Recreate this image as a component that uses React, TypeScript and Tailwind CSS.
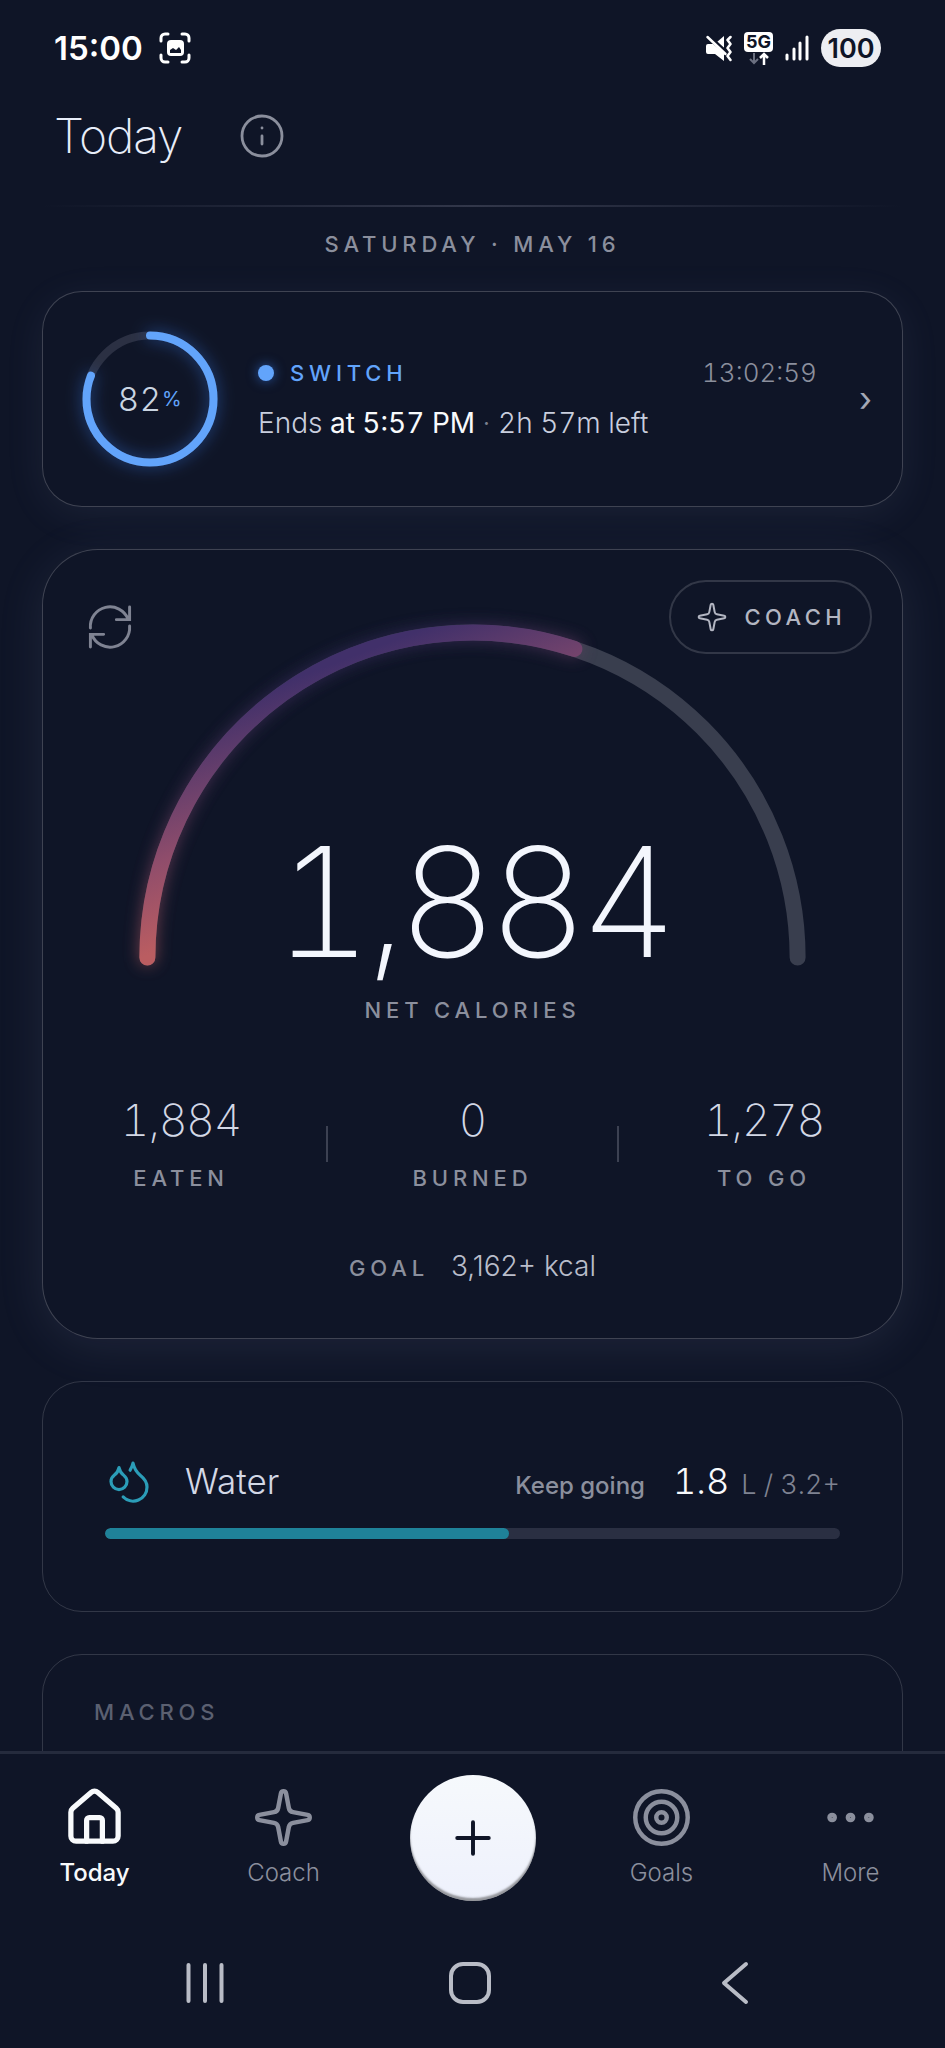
import { Droplets, Ellipsis, House, Info, Plus, Sparkle, Target } from "lucide-react";

const stats = [
  { label: "Eaten", value: "1,884" },
  { label: "Burned", value: "0" },
  { label: "To go", value: "1,278" },
];

function StatusBar() {
  return (
    <div className="flex h-24 shrink-0 items-center justify-between pl-[54px] pr-16">
      <div className="flex items-center gap-4">
        <span className="text-[33px] leading-none font-semibold text-white">15:00</span>
        <svg viewBox="0 0 32 32" className="size-8" fill="none" aria-hidden="true">
          <path
            d="M2 9V6a4 4 0 0 1 4-4h3M23 2h3a4 4 0 0 1 4 4v3M30 23v3a4 4 0 0 1-4 4h-3M9 30H6a4 4 0 0 1-4-4v-3"
            stroke="#fff"
            strokeWidth="3"
            strokeLinecap="round"
          />
          <rect x="8" y="8" width="17" height="16" rx="4" fill="#fff" />
          <path d="M11 21v-3l3-2 3 2 3-3 2 3v3z" fill="#0f1527" />
        </svg>
      </div>

      <div className="flex items-center">
        {/* Mute + vibrate */}
        <svg viewBox="0 0 27 28" className="mr-3 h-7 w-[27px]" fill="none" aria-hidden="true">
          <path d="M1 12q0-2 2-2h5L19 19v8l-9-7H3q-2 0-2-2z" fill="#fff" />
          <path d="M12 8l7-6v12z" fill="#fff" />
          <path d="M4 1l18 17" stroke="#0f1527" strokeWidth="2" />
          <path d="M2.500 3l18 17" stroke="#fff" strokeWidth="2.500" strokeLinecap="round" />
          <path
            d="M25.500 3l-3 3 3 4-3 4 3 4-3 4 3 4"
            stroke="#fff"
            strokeWidth="2.500"
            strokeLinecap="round"
            strokeLinejoin="round"
          />
        </svg>
        <div className="mr-3 flex flex-col items-center">
          <span className="flex h-5 w-[29px] items-center justify-center rounded bg-white text-[18px] leading-none font-bold text-[#0f1527]">
            5G
          </span>
          <svg viewBox="0 0 22 13" className="h-[13px] w-[22px]" fill="none" aria-hidden="true">
            <path d="M6 1v10M2 7l4 4 4-4" stroke="#6b7080" strokeWidth="2" />
            <path d="M16 13V2M12 6l4-4 4 4" stroke="#fff" strokeWidth="2.500" />
          </svg>
        </div>
        <svg viewBox="0 0 24 26" className="mr-3 h-[26px] w-6" aria-hidden="true">
          <g stroke="#fff" strokeWidth="3" strokeLinecap="round">
            <path d="M2 20v4M9 14v10M15 8v16M22 2v22" />
          </g>
        </svg>
        <span className="flex h-[38px] w-[60px] items-center justify-center rounded-full bg-[#edeef2] text-[27px] leading-none font-semibold text-[#0f1527]">
          100
        </span>
      </div>
    </div>
  );
}

function FastingCard() {
  return (
    <section className="flex h-[216px] shrink-0 items-center rounded-[40px] border border-white/20 bg-[#0f1527] pr-[30px] pl-[39px] shadow-[0_8px_40px_rgba(170,180,230,0.08)]">
      <div className="relative mr-10 size-[136px] shrink-0">
        <svg
          viewBox="0 0 136 136"
          className="size-full -rotate-90 overflow-visible"
          fill="none"
          aria-hidden="true"
        >
          <circle cx="68" cy="68" r="63.5" stroke="#2b3043" strokeWidth="8" />
          <circle
            cx="68"
            cy="68"
            r="63.5"
            stroke="#62a4fb"
            strokeWidth="8"
            strokeLinecap="round"
            pathLength="100"
            strokeDasharray="81 100"
            className="drop-shadow-[0_0_8px_rgba(59,130,246,0.5)]"
          />
        </svg>
        <div className="absolute inset-0 flex items-center justify-center">
          <span className="text-[33px] leading-none font-light tracking-wider text-slate-300">82</span>
          <span className="text-[20px] leading-none text-[#62a4fb]">%</span>
        </div>
      </div>

      <div className="flex flex-1 flex-col gap-3">
        <div className="flex items-center">
          <span className="size-4 rounded-full bg-[#62a4fb] shadow-[0_0_12px_rgba(59,130,246,0.6)]" />
          <span className="ml-4 text-[22px] leading-9 font-medium tracking-[0.22em] text-[#62a4fb] uppercase">
            Switch
          </span>
          <span className="mr-[42px] ml-auto text-[26px] leading-9 font-light text-[#8b8f9d] tabular-nums">
            13:02:59
          </span>
        </div>
        <p className="text-[28px] leading-10 font-light text-[#c9cede] tabular-nums">
          Ends <span className="font-normal text-slate-50">at 5:57 PM</span>
          <span className="text-[#7b8090]"> · </span>2h 57m left
        </p>
      </div>
      <a href="#fasting" aria-label="Open fasting" className="text-[34px] leading-none text-[#a4a8b5]">
        ›
      </a>
    </section>
  );
}

function CalorieGauge() {
  return (
    <svg
      viewBox="0 0 860 424"
      className="col-start-1 row-start-1 w-full overflow-visible"
      fill="none"
      role="img"
      aria-label="1,884 of 3,162 kcal"
    >
      <defs>
        <linearGradient id="gauge" gradientUnits="userSpaceOnUse" x1="313" y1="105" x2="387" y2="297">
          <stop offset="0" stopColor="#41306a" />
          <stop offset="0.34" stopColor="#6d416c" />
          <stop offset="0.6" stopColor="#904d6b" />
          <stop offset="1" stopColor="#ba5d61" />
        </linearGradient>
        <filter id="glow" filterUnits="userSpaceOnUse" x="60" y="40" width="740" height="420">
          <feGaussianBlur stdDeviation="8" />
        </filter>
      </defs>
      <path
        d="M104.500 408a325.500 325.500 0 0 1 651 0"
        stroke="#393e4e"
        strokeWidth="16"
        strokeLinecap="round"
      />
      <g stroke="url(#gauge)" strokeWidth="16" strokeLinecap="round">
        <path d="M104.500 408A325.500 325.500 0 0 1 532 99" filter="url(#glow)" opacity="0.6" />
        <path d="M104.500 408A325.500 325.500 0 0 1 532 99" />
      </g>
    </svg>
  );
}

function CaloriesCard() {
  return (
    <section className="relative shrink-0 rounded-[56px] border border-white/20 bg-[#0f1527] pb-[52px] shadow-[0_8px_48px_rgba(170,180,230,0.1)]">
      <button type="button" aria-label="Refresh" className="absolute top-[53px] left-[43px] text-[#7f8392]">
        <svg
          viewBox="0 0 49 49"
          className="size-12"
          fill="none"
          stroke="currentColor"
          strokeWidth="3"
          strokeLinecap="round"
          aria-hidden="true"
        >
          <path d="M4.500 25.500A20 20 0 0 1 43 16.500M44.500 4v13H31" />
          <path d="M44.500 23.500A20 20 0 0 1 6 32.500M4.500 45V32h13.500" />
        </svg>
      </button>
      <button
        type="button"
        className="absolute top-[30px] right-[30px] flex h-[74px] items-center gap-4 rounded-full border-2 border-white/15 pr-6 pl-[25px] text-[#b3b6c2]"
      >
        <Sparkle className="size-8" strokeWidth={1.5} />
        <span className="text-[22px] font-medium tracking-[0.2em] uppercase">Coach</span>
      </button>

      <div className="grid">
        <CalorieGauge />
        <p className="col-start-1 row-start-1 self-end text-center text-[152px] leading-[144px] font-extralight tracking-tighter text-[#f3f6fd] tabular-nums">
          1,884
        </p>
      </div>
      <p className="mt-5 text-center text-[22px] leading-8 font-medium tracking-[0.22em] text-[#8b8f9d] uppercase">
        Net calories
      </p>

      <div className="mt-[68px] flex items-center justify-between px-[78px]">
        {stats.map((s, i) => (
          <div key={s.label} className="contents">
            {i > 0 && <span className="h-9 w-[2px] bg-[#3c4152]" />}
            <div className="flex flex-col items-center gap-4">
              <span className="text-[44px] leading-[52px] font-extralight tracking-tight text-[#d3d8e6] tabular-nums">
                {s.value}
              </span>
              <span className="text-[22px] leading-8 font-medium tracking-[0.22em] text-[#8b8f9d] uppercase">
                {s.label}
              </span>
            </div>
          </div>
        ))}
      </div>

      <div className="mt-[54px] flex items-baseline justify-center gap-[22px]">
        <span className="text-[22px] leading-9 font-medium tracking-[0.22em] text-[#8b8f9d] uppercase">Goal</span>
        <span className="text-[28px] leading-9 font-light text-[#b9bdca]">3,162+ kcal</span>
      </div>
    </section>
  );
}

function WaterCard() {
  const percent = 55;

  return (
    <section className="shrink-0 rounded-[40px] border border-white/15 px-[62px] pt-[72px] pb-[72px]">
      <div className="flex items-center">
        <Droplets className="size-12 text-[#2b9db8]" strokeWidth={1.6} />
        <h2 className="ml-8 text-[35px] leading-[54px] font-light text-[#d3d8e6]">Water</h2>
        <div className="ml-auto flex items-baseline">
          <span className="text-[24px] font-medium text-[#8b8f9d]">Keep going</span>
          <span className="ml-7 text-[36px] leading-[54px] font-light text-slate-50 tabular-nums">1.8</span>
          <span className="ml-3 text-[27px] font-light text-[#7f8392] tabular-nums">L / 3.2+</span>
        </div>
      </div>
      <div className="mt-5 h-[11px] overflow-hidden rounded-full bg-[#2a2f42]">
        <div className="h-full rounded-full bg-[#1f8299]" style={{ width: `${percent}%` }} />
      </div>
    </section>
  );
}

function TabBar() {
  return (
    <nav className="flex h-[172px] shrink-0 border-t-[3px] border-[#252b3d]">
      <a href="#today" className="flex flex-1 flex-col items-center gap-2 pt-8 text-slate-50">
        <House className="size-[63px]" strokeWidth={2} />
        <span className="text-[24px] leading-8 font-medium">Today</span>
      </a>
      <a href="#coach" className="flex flex-1 flex-col items-center gap-2 pt-8 text-[#8b8f9d]">
        <Sparkle className="size-[63px]" strokeWidth={1.7} />
        <span className="text-[24px] leading-8 font-light">Coach</span>
      </a>
      <div className="flex flex-1 justify-center pt-[21px]">
        <button
          type="button"
          aria-label="Add"
          className="flex size-[126px] items-center justify-center rounded-full bg-linear-to-b from-[#f6f9fc] to-[#eef1fc] text-[#0f1527] shadow-[inset_0_-3px_2px_rgba(60,60,60,0.5)]"
        >
          <Plus className="size-[54px]" strokeWidth={1.75} />
        </button>
      </div>
      <a href="#goals" className="flex flex-1 flex-col items-center gap-2 pt-8 text-[#8b8f9d]">
        <Target className="size-[63px]" strokeWidth={1.7} />
        <span className="text-[24px] leading-8 font-light">Goals</span>
      </a>
      <a href="#more" className="flex flex-1 flex-col items-center gap-2 pt-8 text-[#8b8f9d]">
        <Ellipsis className="size-[63px]" strokeWidth={1.7} />
        <span className="text-[24px] leading-8 font-light">More</span>
      </a>
    </nav>
  );
}

function SystemNav() {
  return (
    <div className="flex h-[125px] shrink-0 items-start justify-around pt-[38px] pr-[78px] pl-[72px] text-[#b9bcc6]">
      <button type="button" aria-label="Recent apps">
        <svg viewBox="0 0 44 44" className="size-11" stroke="currentColor" strokeWidth="4" strokeLinecap="round" fill="none">
          <path d="M5.500 4v36M22 4v36M38.500 4v36" />
        </svg>
      </button>
      <button type="button" aria-label="Home">
        <svg viewBox="0 0 44 44" className="size-11" stroke="currentColor" strokeWidth="4" fill="none">
          <rect x="3" y="3" width="38" height="38" rx="12" />
        </svg>
      </button>
      <button type="button" aria-label="Back">
        <svg
          viewBox="0 0 44 44"
          className="size-11"
          stroke="currentColor"
          strokeWidth="4"
          strokeLinecap="round"
          strokeLinejoin="round"
          fill="none"
        >
          <path d="M33 3L11 22l22 19" />
        </svg>
      </button>
    </div>
  );
}

export default function App() {
  return (
    <div className="flex h-screen flex-col bg-[#0f1527] font-['Inter',sans-serif]">
      <StatusBar />
      <header className="flex h-20 shrink-0 items-center pl-[54px]">
        <h1 className="text-[48px] leading-none font-extralight tracking-tight text-[#e8edf9]">Today</h1>
        <button type="button" aria-label="About today" className="ml-14 text-[#8b8f9d]">
          <Info className="size-12" strokeWidth={1.4} />
        </button>
      </header>

      <main className="flex min-h-0 flex-1 flex-col gap-[42px] overflow-y-auto px-[42px] pt-[29px] [scrollbar-width:none]">
        <div className="-mb-[11px] shrink-0">
          <div className="h-[2px] bg-linear-to-r from-transparent via-[#32374a] to-transparent" />
          <p className="mt-[21px] text-center text-[22px] leading-8 font-medium tracking-[0.22em] text-[#8b8f9d] uppercase">
            Saturday · May 16
          </p>
        </div>
        <FastingCard />
        <CaloriesCard />
        <WaterCard />
        <section className="min-h-80 shrink-0 rounded-[40px] border border-white/15 px-[51px] pt-[39px]">
          <h2 className="text-[22px] leading-9 font-medium tracking-[0.22em] text-[#5b6071] uppercase">Macros</h2>
        </section>
      </main>

      <TabBar />
      <SystemNav />
    </div>
  );
}
